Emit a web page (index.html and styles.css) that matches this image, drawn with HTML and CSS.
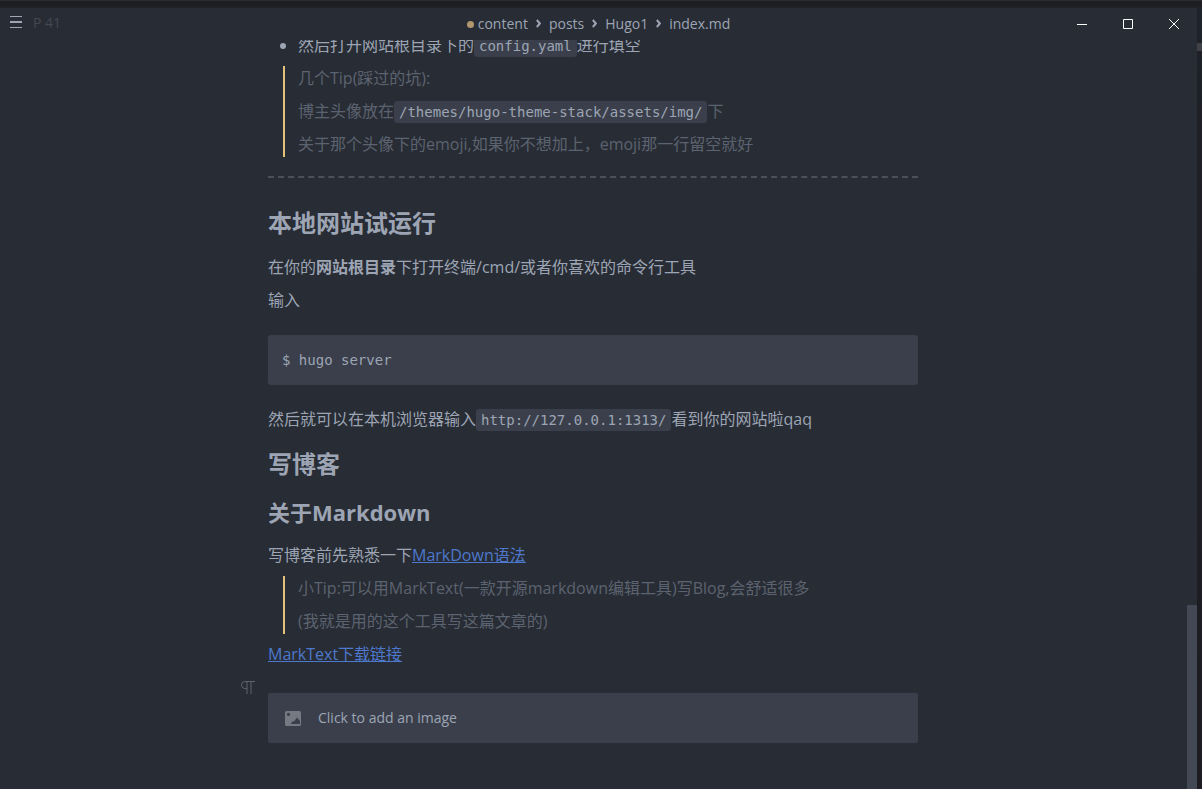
FILE: index.html
```html
<!DOCTYPE html>
<html lang="zh-CN">
<head>
<meta charset="utf-8">
<title>index.md</title>
<link rel="stylesheet" href="styles.css">
</head>
<body>
<div class="window">
  <header class="titlebar">
    <div class="side">
      <button class="menu" type="button" aria-label="Menu"><svg width="12" height="12" viewBox="0 0 12 12" stroke="currentColor"><path d="M0 .5h12M0 5.500h12M0 6.500h12M0 11.500h12"/></svg></button>
      <span class="count">P 41</span>
    </div>
    <nav class="path" aria-label="File path">
      <span class="unsaved"></span>
      <span>content</span>
      <svg class="chevron" width="5" height="9" viewBox="0 0 5 9"><path d="M.8 1l3 3.500L.8 8"/></svg>
      <span>posts</span>
      <svg class="chevron" width="5" height="9" viewBox="0 0 5 9"><path d="M.8 1l3 3.500L.8 8"/></svg>
      <span>Hugo1</span>
      <svg class="chevron" width="5" height="9" viewBox="0 0 5 9"><path d="M.8 1l3 3.500L.8 8"/></svg>
      <span>index.md</span>
    </nav>
    <div class="controls">
      <button type="button" aria-label="Minimize"><svg width="10" height="10" viewBox="0 0 10 10"><path d="M0 5.5h10"/></svg></button>
      <button type="button" aria-label="Maximize"><svg width="10" height="10" viewBox="0 0 10 10"><path d="M.5.5h9v9h-9z"/></svg></button>
      <button type="button" aria-label="Close"><svg width="10" height="10" viewBox="0 0 10 10"><path d="M0 0l10 10M10 0L0 10"/></svg></button>
    </div>
  </header>
  <div class="editor">
    <main class="document">
      <ul>
        <li>然后打开网站根目录下的<code>config.yaml</code>进行填空</li>
      </ul>
      <blockquote>
        <p>几个Tip(踩过的坑):</p>
        <p>博主头像放在<code>/themes/hugo-theme-stack/assets/img/</code>下</p>
        <p>关于那个头像下的emoji,如果你不想加上，emoji那一行留空就好</p>
      </blockquote>
      <hr>
      <h2>本地网站试运行</h2>
      <p>在你的<strong>网站根目录</strong>下打开终端/cmd/或者你喜欢的命令行工具</p>
      <p>输入</p>
      <pre>$ hugo server</pre>
      <p>然后就可以在本机浏览器输入<code>http://127.0.0.1:1313/</code>看到你的网站啦qaq</p>
      <h2>写博客</h2>
      <h3>关于Markdown</h3>
      <p>写博客前先熟悉一下<a href="#markdown">MarkDown语法</a></p>
      <blockquote>
        <p>小Tip:可以用MarkText(一款开源markdown编辑工具)写Blog,会舒适很多</p>
        <p>(我就是用的这个工具写这篇文章的)</p>
      </blockquote>
      <p><a href="#marktext">MarkText下载链接</a></p>
      <div class="image-block">
        <svg class="pilcrow" width="14" height="13" viewBox="0 0 14 13"><path d="M14 .5H4a3.500 3.500 0 0 0 0 7h2M6 .5V13M10 .5V13"/></svg>
        <button class="add-image" type="button">
          <svg width="16" height="15" viewBox="0 0 16 15"><path fill="currentColor" fill-rule="evenodd" d="M1.500 0h13A1.500 1.500 0 0 1 16 1.500v12a1.500 1.500 0 0 1-1.500 1.500h-13A1.500 1.500 0 0 1 0 13.500v-12A1.500 1.500 0 0 1 1.500 0zM3.500 1.800a1.600 1.600 0 1 0 0 3.200 1.600 1.600 0 0 0 0-3.200zM5.500 13H15V10L12 6.500 9 10.500 8 10z"/></svg>
          Click to add an image
        </button>
      </div>
    </main>
    <div class="scrollbar"><div class="thumb"></div></div>
  </div>
</div>
<div class="desktop-edge"></div>
</body>
</html>
```
FILE: styles.css
```css
* {
  box-sizing: border-box;
}

body {
  margin: 0;
  height: 100vh;
  padding-top: 8px;
  display: flex;
  overflow: hidden;
  background: linear-gradient(#2a2b2f 1px, #1d1e22 1px, #1d1e22 6px, #202329 8px, #1f222b 9px);
  color: #9da5b4;
  font: 16px/25px "Open Sans", "Noto Sans CJK SC", sans-serif;
}

button {
  border: 0;
  padding: 0;
  background: none;
  color: inherit;
  font: inherit;
}

.window {
  flex: 1;
  min-width: 0;
  display: flex;
  flex-direction: column;
  background: #282c34;
}

.desktop-edge {
  width: 5px;
  background: linear-gradient(#1e222a 35px, #404147 35px, #404147 43px, #1e2129 43px, #1e2026 110px, #1c1c22);
}

.titlebar {
  flex: none;
  height: 32px;
  display: grid;
  grid-template-columns: 1fr auto 1fr;
  align-items: center;
  font-size: 14px;
}

.side {
  display: flex;
  align-items: center;
  gap: 11px;
  padding: 0 0 4px 10px;
}

.menu {
  display: flex;
}

.count {
  color: #434852;
}

.path {
  display: flex;
  align-items: center;
  gap: 8px;
  padding-bottom: 2px;
}

.unsaved {
  width: 7px;
  height: 7px;
  margin: 3px -4px 0 0;
  border-radius: 50%;
  background: #b1976f;
}

.chevron {
  fill: none;
  stroke: currentColor;
  stroke-width: 2;
}

.controls {
  display: flex;
  justify-content: flex-end;
}

.controls button {
  width: 46px;
  height: 32px;
  display: flex;
  align-items: center;
  justify-content: center;
}

.controls svg {
  fill: none;
  stroke: #fff;
}

.editor {
  flex: 1;
  min-height: 0;
  display: flex;
  overflow: hidden;
}

.document {
  flex: 1;
  max-width: 651px;
  margin: -7px auto 0;
  padding-right: 1px;
}

.scrollbar {
  width: 10px;
  display: flex;
  flex-direction: column;
  justify-content: flex-end;
}

.thumb {
  height: 184px;
  background: #424954;
}

p,
ul,
blockquote {
  margin: 0 0 8px;
}

ul {
  padding-left: 30px;
}

blockquote {
  margin-left: 15px;
  padding-left: 13px;
  border-left: 2px solid #e5c07b;
  color: #5c6370;
}

blockquote p:last-child {
  margin-bottom: 0;
}

code,
pre {
  font-family: "DejaVu Sans Mono", monospace;
  font-size: 14px;
  color: #9da5b4;
  background: #3a3f4b;
  border-radius: 3px;
}

code {
  padding: 3px 5px;
  line-height: 16px;
}

pre {
  margin: 22px 0;
  padding: 13px 14px 12px;
}

hr {
  margin: 19px 0 29px;
  border: 0;
  border-top: 2px dashed #4b505c;
}

h2,
h3 {
  line-height: 32px;
}

h2 {
  margin: 16px 0;
  font-size: 24px;
}

h3 {
  margin: 16px 0 15px;
  font-size: 22px;
}

a {
  color: #4d78cc;
}

.image-block {
  position: relative;
  margin-top: 26px;
}

.pilcrow {
  position: absolute;
  left: -27px;
  top: -12px;
  fill: none;
  stroke: #5c6370;
}

.add-image {
  width: 100%;
  height: 50px;
  padding: 0 17px;
  display: flex;
  align-items: center;
  gap: 17px;
  border-radius: 2px;
  background: #3a3f4b;
  font-size: 14px;
  line-height: 24px;
}

.add-image svg {
  color: #747982;
}
```
